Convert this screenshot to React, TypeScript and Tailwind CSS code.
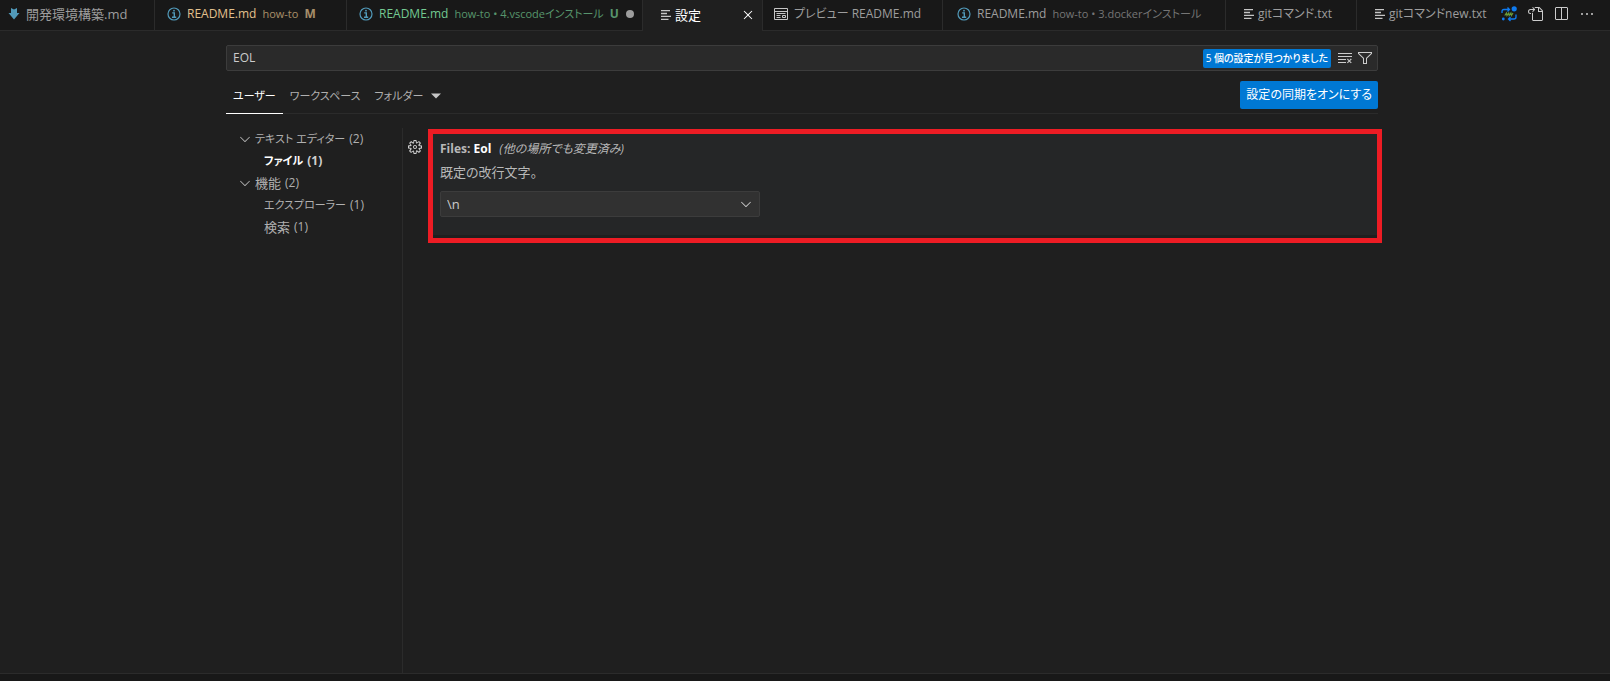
import type { ReactNode } from 'react'
import {
  VscChevronDown,
  VscClearAll,
  VscClose,
  VscEllipsis,
  VscFilter,
  VscGear,
  VscGoToFile,
  VscSplitHorizontal,
} from 'react-icons/vsc'

function InfoIcon() {
  return (
    <svg viewBox="0 0 14 14" className="size-3.5 shrink-0 text-[#519aba]" fill="none" stroke="currentColor">
      <circle cx="7" cy="7" r="6" strokeWidth="1.2" />
      <path d="M5.2 5.9h2.1v4.2M5 10.3h4.2" strokeWidth="1.4" />
      <circle cx="7" cy="3.7" r="0.9" fill="currentColor" stroke="none" />
    </svg>
  )
}

function ArrowIcon() {
  return (
    <svg viewBox="0 0 12 12" className="size-3 shrink-0" fill="#519aba">
      <path d="M3 0l3 1.500L9 0v5h2.500L6 11.500.5 5H3z" />
    </svg>
  )
}

function LinesIcon() {
  return (
    <svg viewBox="0 0 10 10" className="size-2.5 shrink-0" stroke="#c5c5c5" strokeWidth="1.3">
      <path d="M0 .7h9M0 3.5h6M0 6.4h10M0 9.3h7.5" />
    </svg>
  )
}

function PreviewIcon() {
  return (
    <svg viewBox="0 0 14 12" className="h-3 w-3.5 shrink-0" fill="none" stroke="#c5c5c5">
      <path d="M.5.5h13v11H.5zM.5 3.5h13M2.5 5.5h9M2.5 7.5h4M2.5 9.5h4M8.5 7.5h3v2h-3z" />
    </svg>
  )
}

function SyncIcon() {
  return (
    <svg viewBox="0 0 16 16" className="size-4" fill="none" stroke="#0f7bf0" strokeWidth="1.3">
      <path d="M1 7V5.500Q1 3.500 3 3.500h5M6.500 1.500l2 2-2 2M15 8.500V11q0 2-2 2H8M9.500 11l-2 2 2 2" />
      <circle cx="13.200" cy="2.800" r="2.600" fill="#0f7bf0" stroke="none" />
      <circle cx="2.300" cy="13" r="1.400" fill="#0f7bf0" stroke="none" />
      <path d="M3.800 9.500l1.700-2.500.5 2.500L7.700 7l.5 2.500L9.900 7l.5 2.500L12 7" stroke="#6a9a3a" strokeWidth="1.200" />
    </svg>
  )
}

type TabProps = {
  width: string
  icon: ReactNode
  name: string
  detail?: string
  status?: string
  color?: string
  active?: boolean
  children?: ReactNode
}

function Tab({ width, icon, name, detail, status, color = 'text-[#9d9d9d]', active, children }: TabProps) {
  return (
    <div
      role="tab"
      aria-selected={!!active}
      className={`flex shrink-0 items-center whitespace-nowrap border-r border-r-[#2b2b2b] pb-0.5 ${width} ${color} ${
        active ? 'bg-[#1f1f1f]' : 'border-b border-b-[#2b2b2b]'
      }`}
    >
      {icon}
      <span>{name}</span>
      {detail && <span className="text-[11px] opacity-70">{detail}</span>}
      {status && <span className="text-xs font-bold opacity-70">{status}</span>}
      {children}
    </div>
  )
}

function TreeRow({ label, count, child, selected, size = 'text-[11px]' }: { label: string; count: number; child?: boolean; selected?: boolean; size?: string }) {
  return (
    <li
      className={`flex h-[22px] items-center whitespace-nowrap ${child ? 'pl-[38px]' : 'pl-[11px]'} ${
        selected ? 'font-bold text-white' : 'text-[#b0b0b0]'
      }`}
    >
      {!child && <VscChevronDown className="mr-0.5 size-4 shrink-0" />}
      <span className={size}>{label}</span>
      <span className={selected ? 'ml-1 text-xs text-[#d0d0d0]' : 'ml-1 text-xs'}>({count})</span>
    </li>
  )
}

export default function App() {
  return (
    <div className="flex min-h-screen flex-col bg-[#1f1f1f] font-['Open_Sans','Noto_Sans_CJK_JP',sans-serif] text-[13px] leading-[18px] text-[#cccccc] [font-feature-settings:'palt']">
      <header className="flex h-[31px] overflow-hidden bg-[#181818]">
        <div role="tablist" className="flex">
          <Tab width="w-[155px] pl-2 gap-1.5" icon={<ArrowIcon />} name="開発環境構築.md" />
          <Tab width="w-48 pl-3 gap-1.5 text-xs" icon={<InfoIcon />} name="README.md" detail="how-to" status="M" color="text-[#e2c08d]" />
          <Tab width="w-[296px] pl-3 gap-1.5 text-xs" icon={<InfoIcon />} name="README.md" detail="how-to • 4.vscodeインストール" status="U" color="text-[#73c991]">
            <span className="ml-auto mr-2 size-2 rounded-full bg-[#9d9d9d]" />
          </Tab>
          <Tab width="w-[120px] pl-[18px] pr-1.5 gap-1" icon={<LinesIcon />} name="設定" color="text-white" active>
            <button type="button" aria-label="閉じる" className="ml-auto">
              <VscClose className="size-4" />
            </button>
          </Tab>
          <Tab width="w-[180px] pl-[11px] gap-1.5 text-xs" icon={<PreviewIcon />} name="プレビュー README.md" />
          <Tab width="w-[283px] pl-3.5 gap-1.5 text-xs" icon={<InfoIcon />} name="README.md" detail="how-to • 3.dockerインストール" />
          <Tab width="w-[131px] pl-[18px] gap-1 text-xs" icon={<LinesIcon />} name="gitコマンド.txt" />
          <div className="flex border-b border-[#2b2b2b] pb-0.5 pl-[18px] text-xs">
            <div role="tab" aria-selected={false} className="flex items-center gap-1 whitespace-nowrap text-[#9d9d9d]">
              <LinesIcon />
              <span>gitコマンドnew.txt</span>
            </div>
          </div>
        </div>
        <div className="flex flex-1 items-center justify-end gap-2.5 border-b border-[#2b2b2b] pb-0.5 pr-[15px]">
          <button type="button" aria-label="同期"><SyncIcon /></button>
          <button type="button" aria-label="ファイルを開く"><VscGoToFile className="size-4" /></button>
          <button type="button" aria-label="エディターを分割"><VscSplitHorizontal className="size-4" /></button>
          <button type="button" aria-label="その他の操作"><VscEllipsis className="size-4" /></button>
        </div>
      </header>

      <main className="mx-auto flex w-full max-w-[1158px] flex-1 flex-col pr-1.5 pt-3.5">
        <div className="flex h-[26px] items-center rounded-xs border border-[#3c3c3c] bg-[#2a2a2a] pl-1.5 pr-1">
          <input
            type="text"
            aria-label="設定の検索"
            defaultValue="EOL"
            className="min-w-0 flex-1 bg-transparent text-xs outline-none"
          />
          <span className="rounded-xs bg-[#0078d4] px-[3px] text-[10px] font-medium leading-[19px] text-white">5 個の設定が見つかりました</span>
          <button type="button" aria-label="検索をクリア" className="ml-1.5"><VscClearAll className="size-4" /></button>
          <button type="button" aria-label="フィルター" className="ml-1"><VscFilter className="size-4" /></button>
        </div>

        <div className="mt-2 flex h-[35px] items-stretch border-b border-[#2b2b2b]">
          <nav className="flex text-[11px]">
            <button type="button" className="-mb-px border-b border-white px-[7px] text-white">ユーザー</button>
            <button type="button" className="px-[7px] text-[#b0b0b0]">ワークスペース</button>
            <button type="button" className="flex items-center gap-2 px-[7px] text-[#b0b0b0]">
              フォルダー
              <svg viewBox="0 0 10 6" className="h-1.5 w-2.5" fill="#c5c5c5"><path d="M0 .5h10L5 5.500z" /></svg>
            </button>
          </nav>
          <button type="button" className="ml-auto mt-0.5 h-7 rounded-xs bg-[#0078d4] px-1.5 text-xs text-white">設定の同期をオンにする</button>
        </div>

        <div className="mt-3.5 flex flex-1">
          <aside className="w-[177px] shrink-0 border-r border-[#2b2b2b]">
            <ul>
              <TreeRow label="テキスト エディター" count={2} />
              <TreeRow label="ファイル" count={1} child selected />
              <TreeRow label="機能" count={2} size="text-[13px]" />
              <TreeRow label="エクスプローラー" count={1} child />
              <TreeRow label="検索" count={1} child size="text-[13px]" />
            </ul>
          </aside>
          <div className="flex min-w-0 flex-1 items-start gap-[5px] pl-1">
            <button type="button" aria-label="その他の操作" className="mt-[11px]"><VscGear className="size-4" /></button>
            <section className="-mr-1 mt-px h-[114px] flex-1 border-[5px] border-[#ed1c24]">
              <div className="h-[101px] bg-[#252627] pl-[7px] pt-[5px] text-[#b8b8b8]">
                <h2 className="flex gap-2 text-xs leading-5">
                  <span className="font-bold">Files: <span className="text-white">Eol</span></span>
                  <em>(他の場所でも変更済み)</em>
                </h2>
                <label htmlFor="eol" className="mt-1 block">既定の改行文字。</label>
                <div className="relative mt-2.5 w-80 text-[#cccccc]">
                  <select id="eol" className="h-[26px] w-full appearance-none rounded-xs border border-[#3c3c3c] bg-[#313131] px-1.5">
                    <option>\n</option>
                  </select>
                  <VscChevronDown className="pointer-events-none absolute right-1.5 top-[5px] size-4" />
                </div>
              </div>
            </section>
          </div>
        </div>
      </main>
      <footer className="h-2 border-t border-[#2b2b2b] bg-[#181818]" />
    </div>
  )
}
